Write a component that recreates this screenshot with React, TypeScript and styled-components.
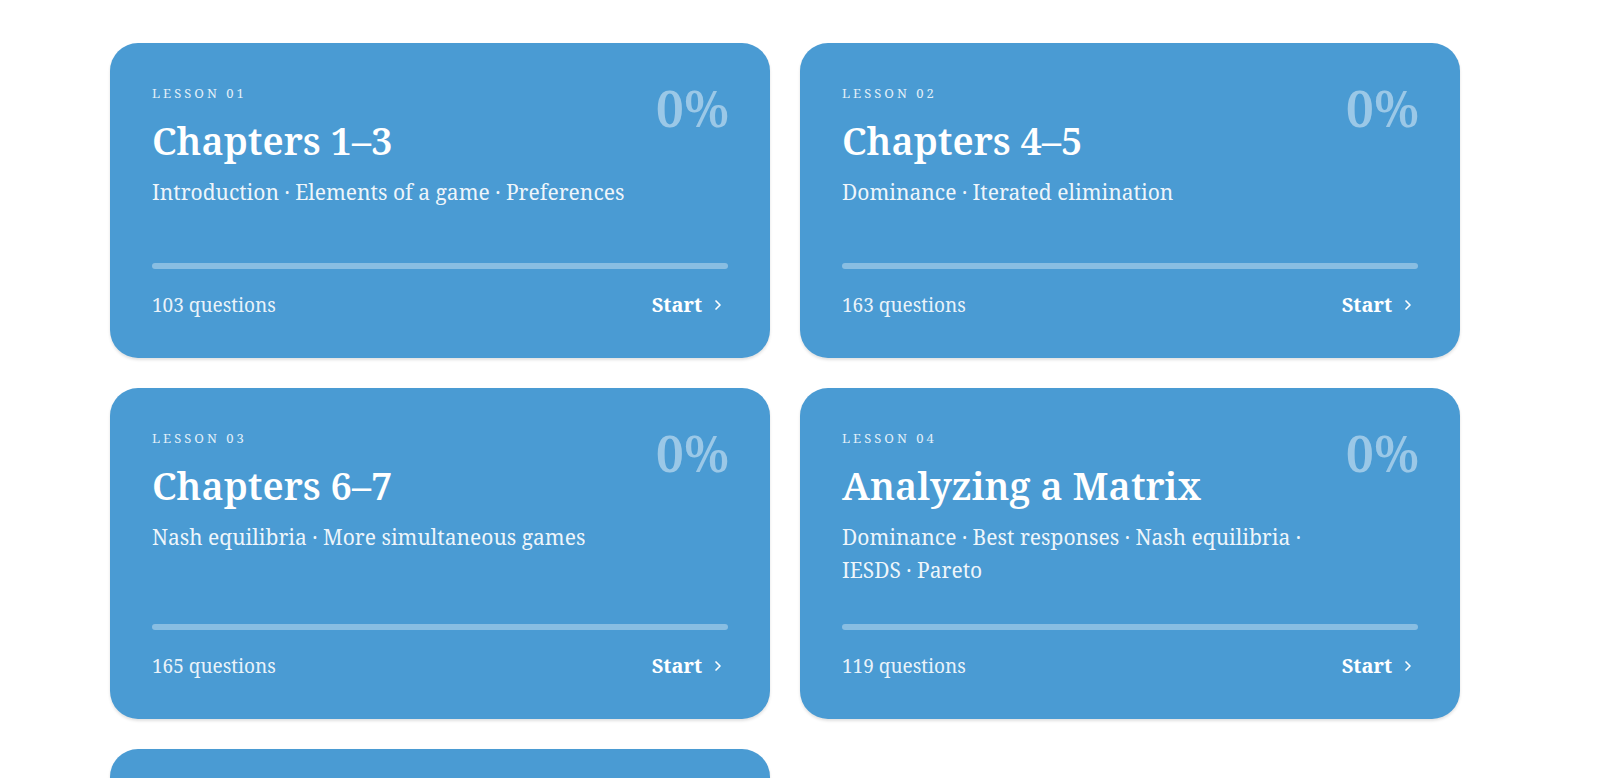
import styled, { createGlobalStyle } from "styled-components";
import { ChevronRight } from "lucide-react";

interface ILesson {
  no: string;
  title: string;
  topics: string;
  questions: number;
  progress: number;
}

const lessons: ILesson[] = [
  { no: "01", title: "Chapters 1–3", topics: "Introduction · Elements of a game · Preferences", questions: 103, progress: 0 },
  { no: "02", title: "Chapters 4–5", topics: "Dominance · Iterated elimination", questions: 163, progress: 0 },
  { no: "03", title: "Chapters 6–7", topics: "Nash equilibria · More simultaneous games", questions: 165, progress: 0 },
  { no: "04", title: "Analyzing a Matrix", topics: "Dominance · Best responses · Nash equilibria · IESDS · Pareto", questions: 119, progress: 0 },
  { no: "05", title: "Chapters 8–9", topics: "Sequential games · Backward induction", questions: 128, progress: 0 },
];

const App = () => {
  return (
    <>
      <GlobalStyle />
      <Grid>
        {lessons.map((lesson) => (
          <Card key={lesson.no}>
            <Percent>{lesson.progress}%</Percent>
            <Label>Lesson {lesson.no}</Label>
            <Title>{lesson.title}</Title>
            <Topics>{lesson.topics}</Topics>
            <Track>
              <Fill style={{ width: `${lesson.progress}%` }} />
            </Track>
            <Footer>
              <Count>{lesson.questions} questions</Count>
              <StartBtn>
                Start
                <ChevronRight size={16} strokeWidth={2.5} />
              </StartBtn>
            </Footer>
          </Card>
        ))}
      </Grid>
    </>
  );
};
export default App;

const GlobalStyle = createGlobalStyle`
  body {
    margin: 0;
    background: #ffffff;
    font-family: "Noto Serif", "DejaVu Serif", serif;
  }
`;

const Grid = styled.div`
  display: grid;
  grid-template-columns: 660px 660px;
  gap: 30px;
  padding: 43px 0 40px 110px;
`;

const Card = styled.div`
  position: relative;
  display: flex;
  flex-direction: column;
  min-height: 315px;
  box-sizing: border-box;
  padding: 40px 42px 40px 42px;
  background: #4a9bd3;
  border-radius: 28px;
  box-shadow: 0 2px 3px rgba(0, 0, 0, 0.12);
  color: #ffffff;
`;

const Percent = styled.div`
  position: absolute;
  top: 38px;
  right: 41px;
  font-size: 50px;
  font-weight: 600;
  color: rgba(255, 255, 255, 0.45);
  line-height: 1.1;
`;

const Label = styled.div`
  font-size: 13px;
  letter-spacing: 3px;
  text-transform: uppercase;
  color: rgba(255, 255, 255, 0.85);
  line-height: 20px;
`;

const Title = styled.h2`
  margin: 11px 0 0;
  font-size: 38px;
  font-weight: 600;
  line-height: 52px;
`;

const Topics = styled.p`
  margin: 10px 0 37px;
  max-width: 490px;
  font-size: 21px;
  line-height: 33px;
  color: rgba(255, 255, 255, 0.92);
`;

const Track = styled.div`
  margin-top: auto;
  height: 6px;
  border-radius: 3px;
  background: rgba(255, 255, 255, 0.35);
  overflow: hidden;
`;

const Fill = styled.div`
  height: 100%;
  background: #ffffff;
`;

const Footer = styled.div`
  display: flex;
  align-items: center;
  justify-content: space-between;
  margin-top: 22px;
`;

const Count = styled.span`
  font-size: 19px;
  line-height: 24px;
  color: rgba(255, 255, 255, 0.9);
`;

const StartBtn = styled.button`
  display: flex;
  align-items: center;
  gap: 8px;
  padding: 0 2px 0 0;
  border: none;
  background: none;
  color: #ffffff;
  font-family: inherit;
  font-size: 20px;
  font-weight: 700;
  cursor: pointer;
`;
